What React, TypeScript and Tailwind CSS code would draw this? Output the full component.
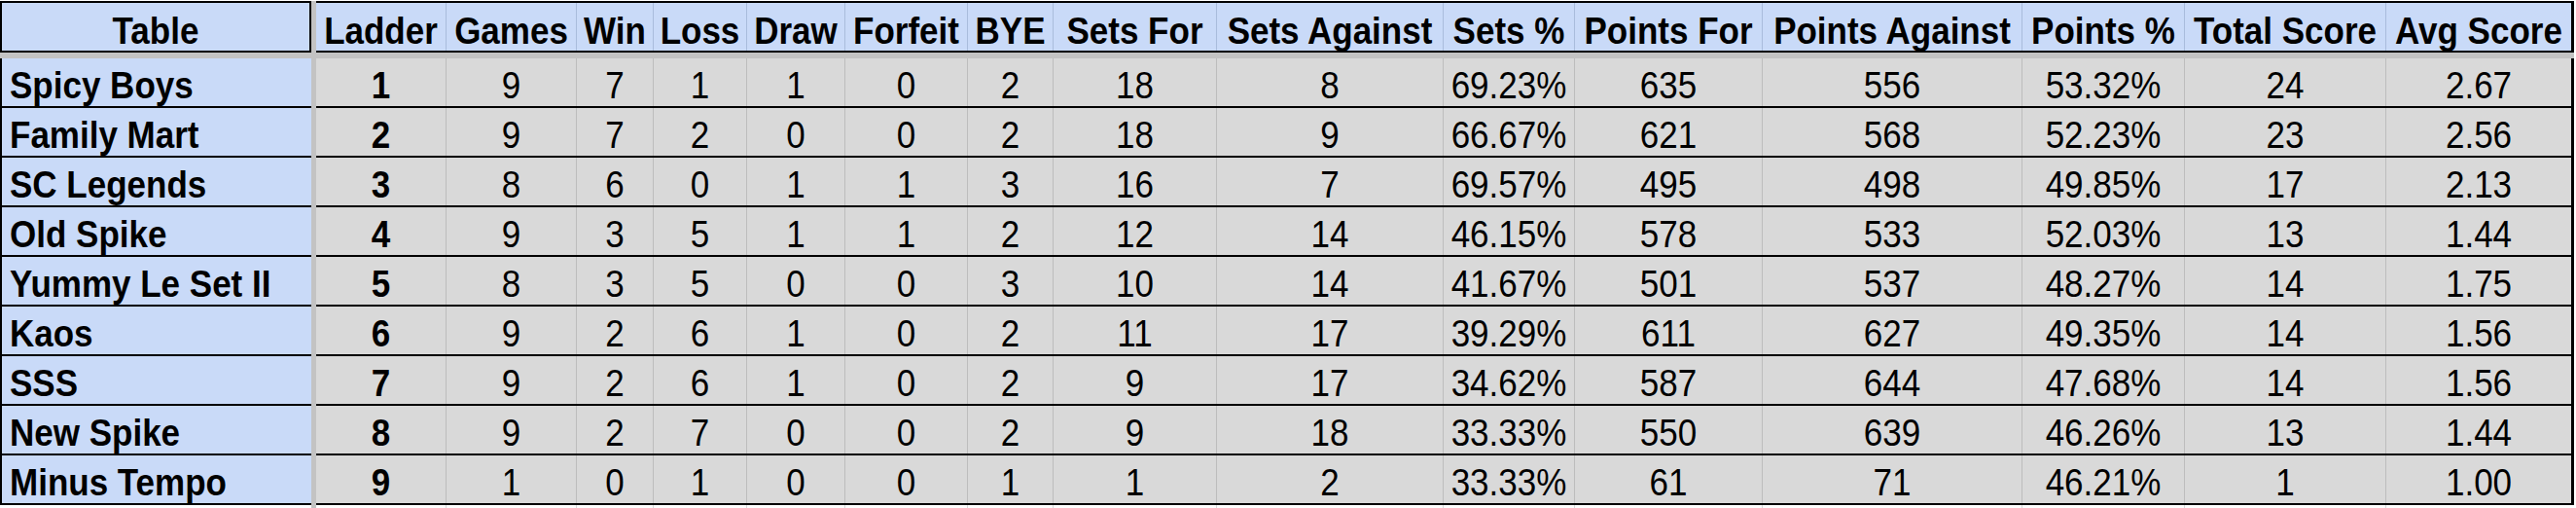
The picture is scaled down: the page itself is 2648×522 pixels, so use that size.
import React from "react";

type Row = [string, ...string[]];

const cols: { label: string; w: string }[] = [
  { label: "Ladder", w: "w-[134px]" },
  { label: "Games", w: "w-[134px]" },
  { label: "Win", w: "w-[79px]" },
  { label: "Loss", w: "w-[96px]" },
  { label: "Draw", w: "w-[101px]" },
  { label: "Forfeit", w: "w-[126px]" },
  { label: "BYE", w: "w-[88px]" },
  { label: "Sets For", w: "w-[168px]" },
  { label: "Sets Against", w: "w-[233px]" },
  { label: "Sets %", w: "w-[135px]" },
  { label: "Points For", w: "w-[193px]" },
  { label: "Points Against", w: "w-[267px]" },
  { label: "Points %", w: "w-[167px]" },
  { label: "Total Score", w: "w-[207px]" },
  { label: "Avg Score", w: "w-[190px]" },
];

const rows: Row[] = [
  ["Spicy Boys", "1", "9", "7", "1", "1", "0", "2", "18", "8", "69.23%", "635", "556", "53.32%", "24", "2.67"],
  ["Family Mart", "2", "9", "7", "2", "0", "0", "2", "18", "9", "66.67%", "621", "568", "52.23%", "23", "2.56"],
  ["SC Legends", "3", "8", "6", "0", "1", "1", "3", "16", "7", "69.57%", "495", "498", "49.85%", "17", "2.13"],
  ["Old Spike", "4", "9", "3", "5", "1", "1", "2", "12", "14", "46.15%", "578", "533", "52.03%", "13", "1.44"],
  ["Yummy Le Set II", "5", "8", "3", "5", "0", "0", "3", "10", "14", "41.67%", "501", "537", "48.27%", "14", "1.75"],
  ["Kaos", "6", "9", "2", "6", "1", "0", "2", "11", "17", "39.29%", "611", "627", "49.35%", "14", "1.56"],
  ["SSS", "7", "9", "2", "6", "1", "0", "2", "9", "17", "34.62%", "587", "644", "47.68%", "14", "1.56"],
  ["New Spike", "8", "9", "2", "7", "0", "0", "2", "9", "18", "33.33%", "550", "639", "46.26%", "13", "1.44"],
  ["Minus Tempo", "9", "1", "0", "1", "0", "0", "1", "1", "2", "33.33%", "61", "71", "46.21%", "1", "1.00"],
];

const font = "font-['Liberation_Sans',Arial,sans-serif] text-[35px] leading-none text-black";

function Freeze() {
  return <div className="w-[5px] shrink-0 self-stretch bg-[#c3c3c3]" />;
}

export default function App() {
  return (
    <div className={`w-[2648px] h-[522px] bg-white flex flex-col pt-px ${font}`}>
      {/* header */}
      <div className="flex h-[53px]">
        <div className="w-[320px] shrink-0 border-2 border-black bg-[#c9daf8] flex items-center justify-center pt-[7px] font-bold">
          <span className="inline-block scale-y-110">Table</span>
        </div>
        <Freeze />
        <div className="flex border-y-2 border-r-[3px] border-black bg-[#c9daf8]">
          {cols.map((c, i) => (
            <div
              key={c.label}
              className={`${c.w} shrink-0 flex items-center justify-center pt-[7px] font-bold whitespace-nowrap ${
                i < cols.length - 1 ? "border-r border-[#a9bcdc]" : ""
              } ${i === cols.length - 1 ? "w-[187px]" : ""}`}
            >
              <span className="inline-block scale-y-110">{c.label}</span>
            </div>
          ))}
        </div>
      </div>

      {/* frozen row separator */}
      <div className="h-[6px] w-[2646px] bg-[#c3c3c3]" />

      {/* body */}
      {rows.map((r) => (
        <div key={r[0]} className="flex h-[51px]">
          <div className="w-[320px] shrink-0 border-l-2 border-b-2 border-black bg-[#c9daf8] flex items-center pl-[8px] pt-[5px] font-bold whitespace-nowrap">
            <span className="inline-block scale-y-110 origin-left">{r[0]}</span>
          </div>
          <Freeze />
          <div className="flex border-b-2 border-r-[3px] border-black bg-[#d9d9d9]">
            {cols.map((c, i) => (
              <div
                key={c.label}
                className={`${c.w} shrink-0 flex items-center justify-center pt-[5px] ${
                  i === 0 ? "font-bold" : ""
                } ${i < cols.length - 1 ? "border-r border-[#bdbdbd]" : "w-[187px]"}`}
              >
                <span className="inline-block scale-y-110">{r[i + 1]}</span>
              </div>
            ))}
          </div>
        </div>
      ))}

      {/* tail */}
      <div className="flex flex-1">
        <div className="w-[320px] shrink-0" />
        <Freeze />
        <div className="flex">
          {cols.map((c, i) => (
            <div
              key={c.label}
              className={`${c.w} shrink-0 ${i < cols.length - 1 ? "border-r border-[#dadada]" : ""}`}
            />
          ))}
        </div>
      </div>
    </div>
  );
}
